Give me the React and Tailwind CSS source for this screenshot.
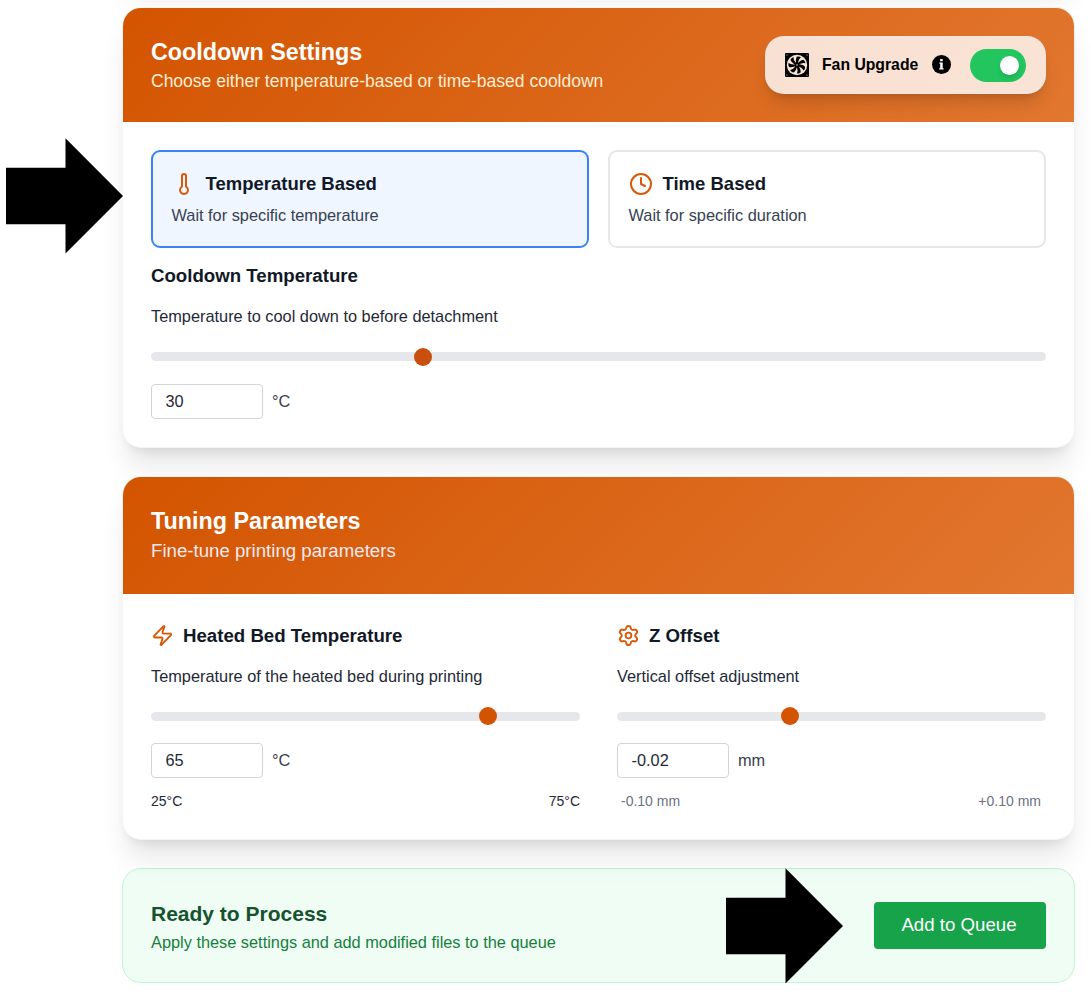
import { useState } from 'react';
import { Clock, Settings, Thermometer, Zap } from 'lucide-react';

const cardClass = 'rounded-[19px] border border-[#f3f4f6] bg-white shadow-[0_23px_29px_-6px_rgba(0,0,0,0.1),0_9px_12px_-7px_rgba(0,0,0,0.1)]';
const headerClass = 'flex justify-between rounded-t-[18px] bg-[linear-gradient(135deg,#d35400,#e27730)] px-7 pt-7';

const FanIcon = () => (
    <svg width="24" height="24" viewBox="0 0 24 24" className="shrink-0">
        <rect width="24" height="24" rx="1" fill="#000" />
        <circle cx="12" cy="12" r="10.2" fill="#f8e3d5" />
        {[10, 61.4, 112.8, 164.3, 215.7, 267.1, 318.6].map(angle => (
            <path
                key={angle}
                d="M11.2 11C10 8.6 9.7 6.4 10.4 4C11.6 3.2 13.4 3.2 14.6 3.9C12.9 5.2 12.4 7.6 12.8 11Z"
                fill="#000"
                transform={`rotate(${angle} 12 12)`}
            />
        ))}
        <circle cx="12" cy="12" r="2.3" fill="#000" />
        <circle cx="12" cy="12" r="1" fill="#8f8279" />
        {[[2, 2], [22, 2], [2, 22], [22, 22]].map(([x, y]) => (
            <circle key={`${x}-${y}`} cx={x} cy={y} r="0.6" fill="#f8e3d5" />
        ))}
    </svg>
);

const InfoIcon = ({ className }) => (
    <svg width="19" height="19" viewBox="0 0 19 19" className={className}>
        <circle cx="9.5" cy="9.5" r="9.5" fill="#000" />
        <rect x="8.1" y="4" width="2.6" height="2.3" rx="0.6" fill="#fff" />
        <path d="M7.4 7.5H10.7V13.2H11.6V14.6H7.2V13.2H8.2V8.8H7.4Z" fill="#fff" />
    </svg>
);

const Arrow = ({ className }) => (
    <svg width="117" height="116" viewBox="0 0 117 116" className={`pointer-events-none absolute z-20 ${className}`}>
        <path d="M0 29.7H59.5V0.3L117 58L59.5 115.6V86.2H0Z" fill="#000" />
    </svg>
);

const ModeCard = ({ icon: Icon, title, text, active, onClick }) => (
    <button
        onClick={onClick}
        className={`flex h-[98px] flex-1 flex-col rounded-[9px] border-2 px-[18.5px] pt-[18px] text-left ${active ? 'border-[#3b82f6] bg-[#eff6ff]' : 'border-gray-200 bg-white'}`}
    >
        <span className="flex h-7 items-center gap-[10px]">
            <Icon className="h-6 w-6 shrink-0 text-[#d9590b]" strokeWidth={2} />
            <span className="text-[18.5px] font-bold text-[#111827]">{title}</span>
        </span>
        <span className="mt-[6px] block text-[16.33px] leading-[23px] text-[#374151]">{text}</span>
    </button>
);

const Slider = ({ percent, thumbClass = 'bg-[#d35400]' }) => (
    <div className="relative h-[9px] rounded-full bg-[#e5e7eb]">
        <span
            className={`absolute top-1/2 h-[18px] w-[18px] -translate-x-1/2 -translate-y-1/2 rounded-full ${thumbClass}`}
            style={{ left: `${percent}%` }}
        />
    </div>
);

const ValueInput = ({ value, unit }) => (
    <div className="mt-[22.5px] flex items-center gap-[9px] text-[16.33px] text-[#374151]">
        <input
            defaultValue={value}
            className="h-[35px] w-[112px] rounded-[4px] border border-[#d1d5db] bg-white px-[13.5px] text-[#1f2937] outline-none"
        />
        <span>{unit}</span>
    </div>
);

const Parameter = ({ icon: Icon, title, text, percent, value, unit, min, max, rangeClass }) => (
    <div className="flex-1">
        <div className="flex h-[27px] items-center gap-[9px]">
            <Icon className="h-[23px] w-[23px] text-[#d9590b]" strokeWidth={2} />
            <h3 className="text-[18.67px] font-bold text-[#111827]">{title}</h3>
        </div>
        <p className="mt-[15.5px] mb-[24px] text-[16.33px] leading-[23px] text-[#1f2937]">{text}</p>
        <Slider percent={percent} />
        <ValueInput value={value} unit={unit} />
        <div className={`mt-[14px] flex justify-between text-[14px] leading-[19px] ${rangeClass}`}>
            <span>{min}</span>
            <span>{max}</span>
        </div>
    </div>
);

export default function App() {
    const [mode, setMode] = useState('temperature');
    const [fanUpgrade, setFanUpgrade] = useState(true);

    return (
        <div className="relative h-[1008px] w-[1091px] overflow-hidden bg-white font-['Liberation_Sans',sans-serif]">
            <Arrow className="left-[6px] top-[138px]" />
            <Arrow className="left-[726px] top-[868px]" />

            <main className="-mt-[70px] ml-[122px] flex w-[953px] flex-col gap-7">
                {/* Bottom of the previous section, scrolled out of view */}
                <div className={`h-[49px] ${cardClass}`} />

                {/* Cooldown */}
                <section className={`h-[441px] ${cardClass}`}>
                    <div className={`h-[114px] ${headerClass}`}>
                        <div>
                            <h2 className="text-[23.33px] font-bold leading-[32px] text-white">Cooldown Settings</h2>
                            <p className="text-[17.5px] leading-[26px] text-[#ffedd5]">Choose either temperature-based or time-based cooldown</p>
                        </div>
                        <div className="flex h-[58px] w-[281px] items-center rounded-[19px] border border-[#e5e7eb]/80 bg-white/80 pl-[19px] shadow-[0_12px_18px_-4px_rgba(0,0,0,0.15),0_5px_7px_-4px_rgba(0,0,0,0.1)]">
                            <FanIcon />
                            <span className="ml-[13px] w-[96px] whitespace-nowrap pb-[1px] text-[15.75px] font-bold text-black">Fan Upgrade</span>
                            <InfoIcon className="mb-[1px] ml-[14px] shrink-0" />
                            <button
                                onClick={() => setFanUpgrade(!fanUpgrade)}
                                className={`ml-[19px] flex h-[33px] w-[56px] items-center rounded-full px-[7px] ${fanUpgrade ? 'justify-end bg-[#22c55e]' : 'justify-start bg-gray-300'}`}
                            >
                                <span className="h-[19px] w-[19px] rounded-full bg-white shadow-md" />
                            </button>
                        </div>
                    </div>
                    <div className="px-7 pt-7">
                        <div className="flex gap-[19px]">
                            <ModeCard
                                icon={Thermometer}
                                title="Temperature Based"
                                text="Wait for specific temperature"
                                active={mode === 'temperature'}
                                onClick={() => setMode('temperature')}
                            />
                            <ModeCard
                                icon={Clock}
                                title="Time Based"
                                text="Wait for specific duration"
                                active={mode === 'time'}
                                onClick={() => setMode('time')}
                            />
                        </div>
                        <h3 className="mt-[14px] text-[18.67px] font-bold leading-7 text-[#111827]">Cooldown Temperature</h3>
                        <p className="mt-[15px] mb-[24px] text-[16.33px] leading-[23px] text-[#1f2937]">Temperature to cool down to before detachment</p>
                        <Slider percent={30.4} thumbClass="bg-[#ca4f0e]" />
                        <ValueInput value="30" unit="°C" />
                    </div>
                </section>

                {/* Tuning */}
                <section className={`relative z-10 h-[364px] ${cardClass}`}>
                    <div className={`h-[117px] ${headerClass}`}>
                        <div>
                            <h2 className="text-[23.33px] font-bold leading-[32px] text-white">Tuning Parameters</h2>
                            <p className="text-[18.67px] leading-[28px] text-[#f3e8ef]">Fine-tune printing parameters</p>
                        </div>
                    </div>
                    <div className="flex gap-[37px] px-7 pt-7">
                        <Parameter
                            icon={Zap}
                            title="Heated Bed Temperature"
                            text="Temperature of the heated bed during printing"
                            percent={78.5}
                            value="65"
                            unit="°C"
                            min="25°C"
                            max="75°C"
                            rangeClass="text-[#1f2937]"
                        />
                        <Parameter
                            icon={Settings}
                            title="Z Offset"
                            text="Vertical offset adjustment"
                            percent={40.3}
                            value="-0.02"
                            unit="mm"
                            min="-0.10 mm"
                            max="+0.10 mm"
                            rangeClass="pl-[4px] pr-[5px] text-[#6b7280]"
                        />
                    </div>
                </section>

                {/* Submit */}
                <section className="flex h-[115px] items-center justify-between rounded-[19px] border border-[#bbf7d0] bg-[#f0fdf4] px-7">
                    <div>
                        <h3 className="text-[21px] font-bold leading-[32px] text-[#14532d]">Ready to Process</h3>
                        <p className="text-[16.33px] leading-[24px] text-[#15803d]">Apply these settings and add modified files to the queue</p>
                    </div>
                    <button className="h-[47px] w-[172px] rounded-[4px] bg-[#16a34a] pr-[2px] pb-[2px] text-[18.67px] text-white">Add to Queue</button>
                </section>
            </main>
        </div>
    );
}
